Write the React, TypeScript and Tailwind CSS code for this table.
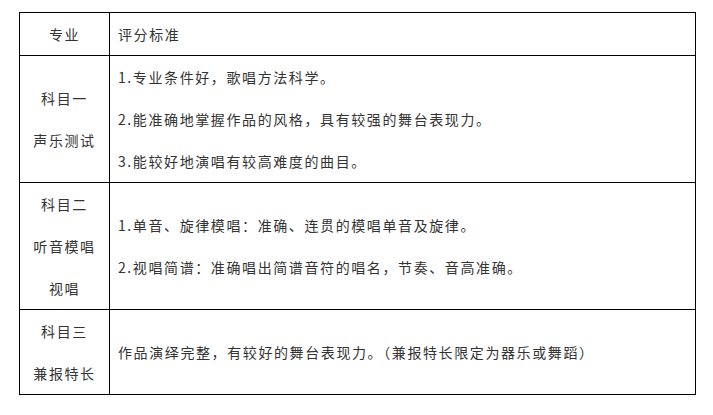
const rows = [
  {
    name: ["科目一", "声乐测试"],
    criteria: [
      "1.专业条件好，歌唱方法科学。",
      "2.能准确地掌握作品的风格，具有较强的舞台表现力。",
      "3.能较好地演唱有较高难度的曲目。",
    ],
    height: "h-[126px]",
  },
  {
    name: ["科目二", "听音模唱", "视唱"],
    criteria: [
      "1.单音、旋律模唱：准确、连贯的模唱单音及旋律。",
      "2.视唱简谱：准确唱出简谱音符的唱名，节奏、音高准确。",
    ],
    height: "h-[126px]",
  },
  {
    name: ["科目三", "兼报特长"],
    criteria: ["作品演绎完整，有较好的舞台表现力。（兼报特长限定为器乐或舞蹈）"],
    height: "h-[84px]",
  },
];

export default function App() {
  return (
    <div
      className="w-[713px] h-[415px] bg-white pl-[19px] pt-[12px] text-[14px] leading-[42px] tracking-[1.6px] text-[#333]"
      style={{ fontFamily: '"Noto Sans CJK SC", "Noto Sans", sans-serif' }}
    >
      <div className="w-[677px] border border-black">
        {/* Header */}
        <div className="flex h-[43px] border-b border-black">
          <div className="w-[90px] border-r border-black flex items-center justify-center">
            专业
          </div>
          <div className="flex-1 flex items-center pl-[8px]">评分标准</div>
        </div>

        {rows.map((row, i) => (
          <div
            key={i}
            className={`flex ${i < rows.length - 1 ? "border-b border-black" : ""}`}
          >
            <div
              className={`w-[90px] ${row.height} border-r border-black flex flex-col items-center justify-center`}
            >
              {row.name.map((n) => (
                <div key={n}>{n}</div>
              ))}
            </div>
            <div className={`flex-1 ${row.height} flex flex-col justify-center pl-[8px]`}>
              {row.criteria.map((c) => (
                <div key={c}>{c}</div>
              ))}
            </div>
          </div>
        ))}
      </div>
    </div>
  );
}
